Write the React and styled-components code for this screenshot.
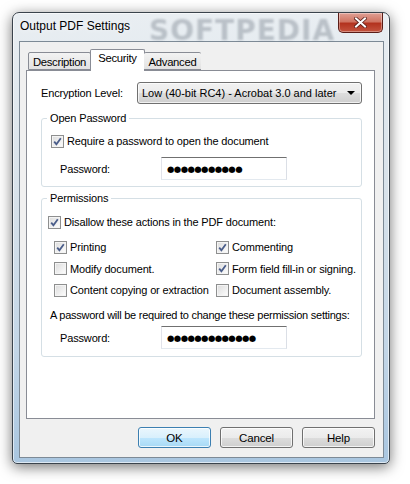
import React from 'react';
import styled, { createGlobalStyle } from "styled-components";

const Global = createGlobalStyle`
  body {
    margin: 0;
    background: #ffffff;
    font-family: "Liberation Sans", Arial, sans-serif;
    font-size: 11px;
    letter-spacing: -0.15px;
    color: #000;
  }
`;

const Stage = styled.div`
  width: 410px;
  height: 484px;
  padding: 12px 0 0 12px;
  box-sizing: border-box;
`;

const Window = styled.div`
  position: relative;
  width: 378px;
  height: 452px;
  box-sizing: border-box;
  border: 1px solid #3a434c;
  border-radius: 7px 7px 5px 5px;
  background: linear-gradient(to bottom, #e9eef2 0%, #d8e2ea 40%, #c3d6e7 75%, #a9c6e0 100%);
  box-shadow: 0 3px 14px rgba(0, 0, 0, 0.55), inset 0 0 0 1px rgba(255,255,255,0.6);
  display: flex;
  flex-direction: column;
`;

const TitleBar = styled.div`
  height: 28px;
  display: flex;
  justify-content: space-between;
  align-items: flex-start;
  padding-left: 7px;
  padding-right: 6px;
`;

const Title = styled.div`
  font-size: 12px;
  letter-spacing: 0;
  line-height: 26px;
  color: #000;
  position: relative;
  z-index: 1;
  text-shadow: 0 0 6px rgba(255,255,255,0.9);
`;

const Watermark = styled.div`
  position: absolute;
  left: 136px;
  top: 1px;
  font-family: "DejaVu Sans", sans-serif;
  font-weight: bold;
  font-size: 28px;
  letter-spacing: 1px;
  color: rgba(70, 80, 92, 0.28);
  filter: blur(1.3px);
  pointer-events: none;
`;

const CloseButton = styled.div`
  position: relative;
  z-index: 1;
  width: 45px;
  height: 20px;
  box-sizing: border-box;
  border: 1px solid #5a1d18;
  border-top: none;
  border-radius: 0 0 5px 5px;
  background: linear-gradient(to bottom, #e0a095 0%, #d07563 45%, #b3331f 55%, #c4543f 100%);
  box-shadow: inset 0 0 0 1px rgba(255,255,255,0.35);
  display: flex;
  align-items: center;
  justify-content: center;
`;

const Client = styled.div`
  flex: 1;
  margin: 0 5px 5px 6px;
  border: 1px solid #7d8a96;
  background: #f0f0f0;
  padding: 7px 8px 9px 6px;
  display: flex;
  flex-direction: column;
`;

const TabStrip = styled.div`
  display: flex;
  align-items: flex-end;
  padding-left: 2px;
  height: 21px;
  position: relative;
  z-index: 1;
`;

const Tab = styled.div`
  box-sizing: border-box;
  width: ${p => p.$w}px;
  height: ${p => (p.$active ? "22px" : "18px")};
  margin-bottom: ${p => (p.$active ? "-1px" : "0")};
  padding-top: ${p => (p.$active ? "1px" : "2px")};
  text-align: center;
  white-space: nowrap;
  border: 1px solid #898c95;
  border-bottom: ${p => (p.$active ? "none" : "1px solid #898c95")};
  border-left: ${p => (p.$first || p.$active ? "1px solid #898c95" : "none")};
  border-right: ${p => (p.$after ? "none" : "1px solid #898c95")};
  border-radius: 2px 2px 0 0;
  background: ${p => (p.$active ? "#ffffff" : "linear-gradient(to bottom, #f3f3f3, #e2e2e2)")};
  font-size: 11.3px;
  letter-spacing: -0.3px;
  line-height: 14px;
  ${p => (p.$active ? "margin-left: -1px; margin-right: -1px;" : "")}
`;

const Panel = styled.div`
  height: 349px;
  box-sizing: border-box;
  border: 1px solid #898c95;
  background: #ffffff;
  padding: 11px 12px 0 14px;
`;

const Row = styled.div`
  display: flex;
  align-items: center;
  margin-top: ${p => p.$mt || 0}px;
`;

const FieldLabel = styled.div`
  width: ${p => p.$w}px;
  padding-left: ${p => p.$pl || 0}px;
  box-sizing: border-box;
  flex-shrink: 0;
  white-space: nowrap;
`;

const Select = styled.div`
  width: 225px;
  height: 22px;
  box-sizing: border-box;
  border: 1px solid #707070;
  border-radius: 3px;
  background: linear-gradient(to bottom, #f2f2f2 0%, #ebebeb 50%, #dddddd 51%, #cfcfcf 100%);
  box-shadow: inset 0 0 0 1px rgba(255,255,255,0.7);
  display: flex;
  align-items: center;
  justify-content: space-between;
  padding: 0 6px 0 4px;
  white-space: nowrap;
  letter-spacing: 0;
`;

const Arrow = styled.div`
  width: 0;
  height: 0;
  border-left: 4px solid transparent;
  border-right: 4px solid transparent;
  border-top: 4px solid #000;
`;

const Group = styled.fieldset`
  margin: ${p => p.$mt}px 0 0 0;
  padding: 0;
  height: ${p => p.$h}px;
  box-sizing: border-box;
  border: 1px solid #d5dfe5;
  border-radius: 3px;
  min-width: 0;
`;

const Legend = styled.legend`
  margin-left: 5px;
  padding: 0 3px;
  font-size: 11px;
  line-height: 14px;
`;

const Spacer = styled.div`
  height: ${p => p.$h}px;
`;

const Check = styled.div`
  display: flex;
  align-items: center;
  gap: 3px;
  height: 14px;
  white-space: nowrap;
  margin-left: ${p => p.$ml || 0}px;
`;

const Box = styled.div`
  width: 13px;
  height: 13px;
  box-sizing: border-box;
  border: 1px solid #8e8f8f;
  background: linear-gradient(135deg, #dcdcdc 0%, #f0f0f0 60%, #ffffff 100%);
  box-shadow: inset 0 0 0 1px #f4f4f4;
  display: flex;
  align-items: center;
  justify-content: center;
  flex-shrink: 0;
`;

const Grid = styled.div`
  display: grid;
  grid-template-columns: 162px 1fr;
  row-gap: 7.5px;
  margin: 11px 0 0 12px;
`;

const Note = styled.div`
  margin: 12px 0 0 8px;
  white-space: nowrap;
  letter-spacing: -0.25px;
`;

const Password = styled.div`
  width: 126px;
  height: 23px;
  box-sizing: border-box;
  border: 1px solid #abadb3;
  border-top-color: #707070;
  border-left-color: #e2e3ea;
  border-right-color: #dbdfe6;
  border-bottom-color: #e3e9ef;
  background: #fff;
  display: flex;
  align-items: center;
  padding-left: 5px;
  font-family: "DejaVu Sans", sans-serif;
  font-size: 8.5px;
  letter-spacing: -0.6px;
`;

const ButtonRow = styled.div`
  display: flex;
  justify-content: flex-end;
  gap: 9px;
  margin-top: 8px;
`;

const Button = styled.div`
  width: 73px;
  height: 21px;
  box-sizing: border-box;
  border: 1px solid ${p => (p.$default ? "#3c7fb1" : "#707070")};
  border-radius: 3px;
  background: ${p => (p.$default
    ? "linear-gradient(to bottom, #eaf6fd 0%, #d9f0fc 50%, #bee6fd 51%, #a7d9f5 100%)"
    : "linear-gradient(to bottom, #f2f2f2 0%, #ebebeb 50%, #dddddd 51%, #cfcfcf 100%)")};
  box-shadow: inset 0 0 0 1px rgba(255,255,255,0.75);
  display: flex;
  align-items: center;
  justify-content: center;
  font-size: 11.5px;
`;

function CheckBox({ checked, label, ml }) {
  return (
    <Check $ml={ml}>
      <Box>
        {checked && (
          <svg width="9" height="9" viewBox="0 0 9 9">
            <path d="M1.2 4.6 L3.4 7.2 L7.8 1.2" fill="none" stroke="#4a5d8a" strokeWidth="1.8" />
          </svg>
        )}
      </Box>
      <span>{label}</span>
    </Check>
  );
}

function App() {
  return (
    <Stage>
      <Global />
      <Window>
        <Watermark>SOFTPEDIA</Watermark>
        <TitleBar>
          <Title>Output PDF Settings</Title>
          <CloseButton>
            <svg width="13" height="11" viewBox="0 0 13 11">
              <path d="M2 1.5 L11 9.5 M11 1.5 L2 9.5" stroke="#5a1d18" strokeWidth="3.6" strokeLinecap="square" />
              <path d="M2 1.5 L11 9.5 M11 1.5 L2 9.5" stroke="#ffffff" strokeWidth="2" strokeLinecap="square" />
            </svg>
          </CloseButton>
        </TitleBar>
        <Client>
          <TabStrip>
            <Tab $first $w={63}>Description</Tab>
            <Tab $active $w={55}>Security</Tab>
            <Tab $after $w={57}>Advanced</Tab>
          </TabStrip>
          <Panel>
            <Row>
              <FieldLabel $w={96}>Encryption Level:</FieldLabel>
              <Select>
                <span>Low (40-bit RC4) - Acrobat 3.0 and later</span>
                <Arrow />
              </Select>
            </Row>
            <Group $mt={7} $h={76}>
              <Legend>Open Password</Legend>
              <Spacer $h={9} />
              <CheckBox checked ml={9} label="Require a password to open the document" />
              <Row $mt={9}>
                <FieldLabel $w={119} $pl={18}>Password:</FieldLabel>
                <Password>●●●●●●●●●●●</Password>
              </Row>
            </Group>
            <Group $mt={4} $h={166}>
              <Legend>Permissions</Legend>
              <Spacer $h={10} />
              <CheckBox checked ml={6} label="Disallow these actions in the PDF document:" />
              <Grid>
                <CheckBox checked label="Printing" />
                <CheckBox checked label="Commenting" />
                <CheckBox label="Modify document." />
                <CheckBox checked label="Form field fill-in or signing." />
                <CheckBox label="Content copying or extraction" />
                <CheckBox label="Document assembly." />
              </Grid>
              <Note>A password will be required to change these permission settings:</Note>
              <Row $mt={5}>
                <FieldLabel $w={119} $pl={18}>Password:</FieldLabel>
                <Password>●●●●●●●●●●●●●</Password>
              </Row>
            </Group>
          </Panel>
          <ButtonRow>
            <Button $default>OK</Button>
            <Button>Cancel</Button>
            <Button>Help</Button>
          </ButtonRow>
        </Client>
      </Window>
    </Stage>
  );
}

export default App;
